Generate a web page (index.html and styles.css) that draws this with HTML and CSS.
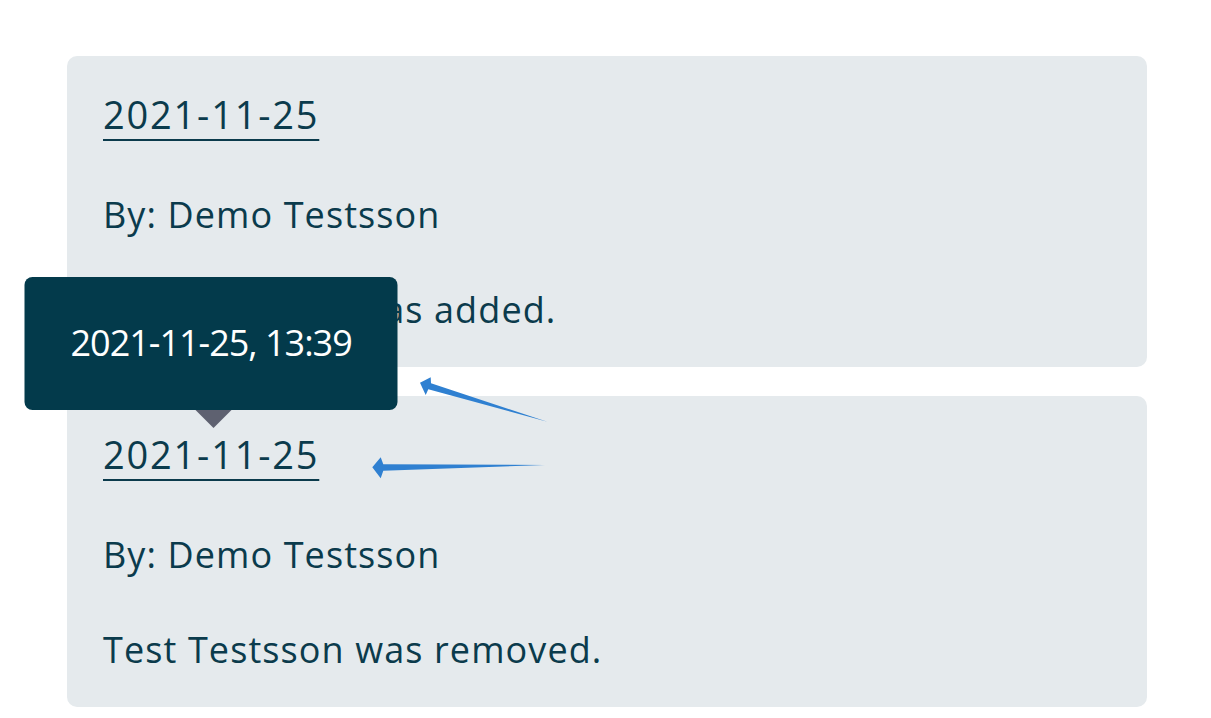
FILE: index.html
```html
<!DOCTYPE html>
<html lang="en">
<head>
  <meta charset="UTF-8" />
  <meta name="viewport" content="width=device-width, initial-scale=1.0" />
  <title>History</title>
  <link rel="stylesheet" href="styles.css">
</head>
<body>
  <div class="history">
    <div class="entry">
      <div class="entry-date"><a href="#" class="date-link">2021-11-25</a></div>
      <p class="entry-line">By: Demo Testsson</p>
      <p class="entry-line">Test Testsson was added.</p>
    </div>

    <div class="entry">
      <div class="entry-date">
        <a href="#" class="date-link has-tip">2021-11-25
          <span class="tooltip">2021-11-25, 13:39</span>
        </a>
      </div>
      <p class="entry-line">By: Demo Testsson</p>
      <p class="entry-line">Test Testsson was removed.</p>
    </div>
  </div>

  <!-- annotation arrows -->
  <svg class="marks" width="1211" height="718" viewBox="0 0 1211 718">
    <polygon points="420,382.7 430.7,377.3 431,383.3 547.3,421.7 428.3,389.3 425.7,395" />
    <polygon points="372.3,467.3 380.7,457.3 383.3,464.3 545,465 383.3,470.7 380.7,478.3" />
  </svg>
</body>
</html>
```

FILE: styles.css
```css
body {
  margin: 0;
  font-family: "Open Sans", Lato, sans-serif;
  color: #0b3b4c;
  background: #fff;
}

.history {
  width: 1080px;
  padding: 56px 0 0 67px;
  display: flex;
  flex-direction: column;
  gap: 29px;
}

.entry {
  background: #e5eaed;
  border-radius: 10px;
  padding: 36px 36px 35px;
}

.entry-date {
  font-size: 38px;
  line-height: 44px;
  letter-spacing: 1.8px;
}

.date-link {
  color: #0b3b4c;
  text-decoration: underline;
  text-decoration-thickness: 2px;
  text-underline-offset: 10px;
}

.has-tip {
  position: relative;
}

.entry-line {
  margin: 57px 0 0;
  font-size: 36px;
  line-height: 44px;
  letter-spacing: 1.1px;
}

.entry-line + .entry-line {
  margin-top: 51px;
}

.tooltip {
  position: absolute;
  left: 50%;
  bottom: 70px;
  transform: translateX(-50%);
  width: 373px;
  height: 133px;
  box-sizing: border-box;
  padding-top: 44px;
  background: #033a4b;
  border-radius: 8px;
  color: #fff;
  font-size: 36px;
  line-height: 44px;
  letter-spacing: -1px;
  text-align: center;
  text-decoration: none;
  white-space: nowrap;
}

.tooltip::after {
  content: "";
  position: absolute;
  left: 50%;
  top: 100%;
  margin-left: -16px;
  border-left: 18px solid transparent;
  border-right: 18px solid transparent;
  border-top: 18px solid #5e6170;
}

.marks {
  position: absolute;
  left: 0;
  top: 0;
  fill: #2f80d1;
  pointer-events: none;
}
```
